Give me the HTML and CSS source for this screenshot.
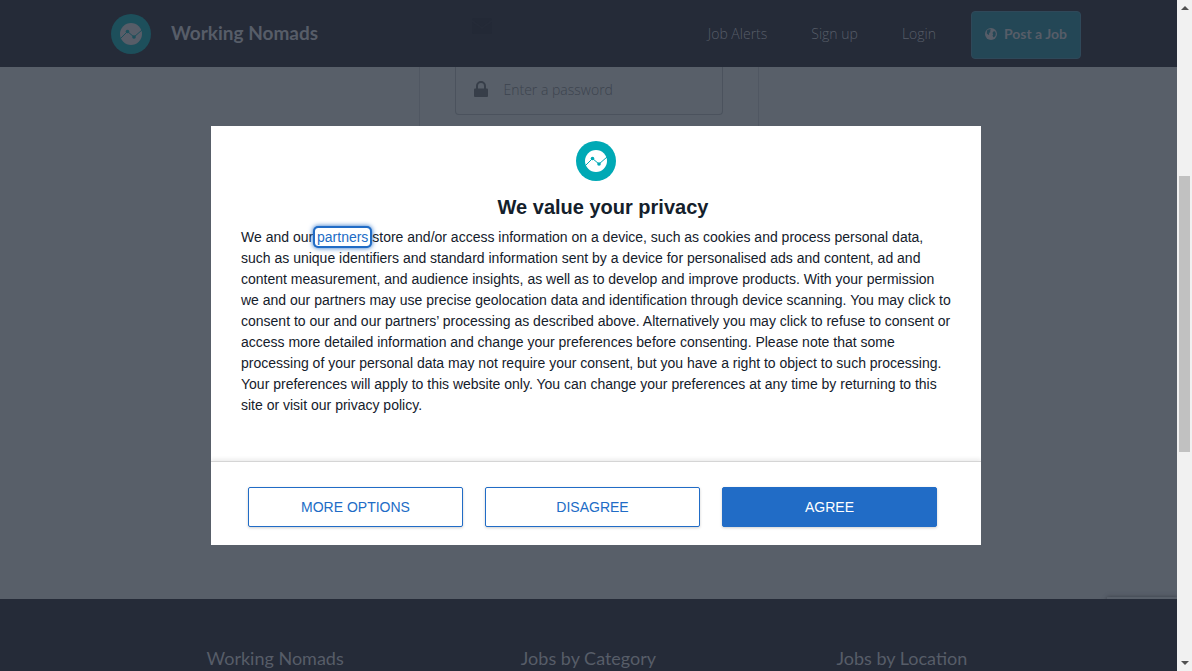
FILE: index.html
```html
<!DOCTYPE html>
<html lang="en">
<head>
<meta charset="utf-8">
<title>Working Nomads</title>
<link rel="stylesheet" href="styles.css">
</head>
<body>
<svg class="defs" aria-hidden="true">
  <symbol id="logo" viewBox="0 0 40 40">
    <circle cx="20" cy="20" r="20" class="logo-ring"/>
    <circle cx="20" cy="20" r="11" class="logo-disc"/>
    <path d="M9.500 24.500 16.500 17.500 23 23 31 16" class="logo-line"/>
    <circle cx="16.500" cy="17.500" r="1.800" class="logo-ring"/>
    <circle cx="23" cy="23" r="1.800" class="logo-ring"/>
  </symbol>
</svg>
<div class="page">
  <header class="topbar">
    <div class="topbar-inner">
      <a class="brand" href="#"><svg class="logo logo-dim" aria-hidden="true"><use href="#logo"/></svg><span>Working Nomads</span></a>
      <svg class="mail" viewBox="0 0 20 16" aria-hidden="true"><path d="M0 1.500Q0 0 1.500 0h17Q20 0 20 1.500L10 9 0 1.500zM0 4l10 7 10-7v10.500Q20 16 18.500 16h-17Q0 16 0 14.500z"/></svg>
      <nav class="nav">
        <a href="#">Job Alerts</a>
        <a href="#">Sign up</a>
        <a href="#">Login</a>
        <a class="post" href="#"><svg class="globe" viewBox="0 0 12 12" aria-hidden="true"><circle cx="6" cy="6" r="6" class="globe-sea"/><path d="M2 2.500 4 1.200 6 1.500 5 3 5.500 4 4 5 4.200 6.200 3.500 7 1.800 5.500zM8.300 3.500l1.700-.3.800 2.300-.4 2.500L8.500 9.500 7.500 7.500 8.200 6.500 7.500 5z" class="globe-land"/></svg>Post a Job</a>
      </nav>
    </div>
  </header>
  <main class="main">
    <form class="card">
      <label class="field">
        <svg class="lock" viewBox="0 0 14 16" aria-hidden="true"><path d="M3 8V5a4 4 0 0 1 8 0v3" class="lock-bow"/><rect y="7.500" width="14" height="8.500" rx="1"/></svg>
        <input type="password" placeholder="Enter a password" aria-label="Password">
      </label>
    </form>
    <div class="badge"></div>
  </main>
  <footer class="footer">
    <div class="footer-cols">
      <h3>Working Nomads</h3>
      <h3>Jobs by Category</h3>
      <h3>Jobs by Location</h3>
    </div>
  </footer>
</div>
<div class="scrollbar" aria-hidden="true">
  <span class="arrow arrow-up"></span>
  <div class="track"><span class="thumb"></span></div>
  <span class="arrow arrow-down"></span>
</div>
<div class="overlay">
  <section class="dialog" role="dialog" aria-labelledby="privacy-title">
    <div class="dialog-logo"><svg class="logo" aria-hidden="true"><use href="#logo"/></svg></div>
    <h2 id="privacy-title">We value your privacy</h2>
    <p class="copy">We and our <a class="partners" href="#">partners</a> store and/or access information on a device, such as cookies and process personal data, such as unique identifiers and standard information sent by a device for personalised ads and content, ad and content measurement, and audience insights, as well as to develop and improve products. With your permission we and our partners may use precise geolocation data and identification through device scanning. You may click to consent to our and our partners’ processing as described above. Alternatively you may click to refuse to consent or access more detailed information and change your preferences before consenting. Please note that some processing of your personal data may not require your consent, but you have a right to object to such processing. Your preferences will apply to this website only. You can change your preferences at any time by returning to this site or visit our privacy policy.</p>
    <div class="actions">
      <button type="button">MORE OPTIONS</button>
      <button type="button">DISAGREE</button>
      <button type="button" class="primary">AGREE</button>
    </div>
  </section>
</div>
</body>
</html>
```

FILE: styles.css
```css
* { box-sizing: border-box; }
body {
  margin: 0;
  display: flex;
  height: 100vh;
  overflow: hidden;
  font-family: "Liberation Sans", Arial, sans-serif;
}
a { color: inherit; text-decoration: none; }
.defs { position: absolute; width: 0; height: 0; }
.page {
  flex: 1;
  display: flex;
  flex-direction: column;
  background: #585f69;
  color: #575d68;
  font-family: Lato, sans-serif;
}

.topbar { background: #252b38; padding: 11px 0 8px 15px; }
.topbar-inner {
  position: relative;
  display: flex;
  align-items: center;
  justify-content: space-between;
  max-width: 970px;
  margin: 0 auto;
}
.brand { display: flex; align-items: center; gap: 20px; padding-bottom: 2px; font-size: 19px; font-weight: 700; line-height: 24px; }
.brand span { padding-bottom: 2px; }
.logo { display: block; width: 40px; height: 40px; }
.logo-ring { fill: var(--ring, #00a9b5); }
.logo-disc { fill: var(--disc, #fff); }
.logo-line { fill: none; stroke: var(--ring, #00a9b5); stroke-width: 1; }
.logo-dim { --ring: #1d4f5b; --disc: #575d68; }
.mail { position: absolute; left: 361px; top: 7px; width: 20px; height: 16px; fill: #232936; }
.nav { display: flex; align-items: center; gap: 44px; font-family: "Open Sans", sans-serif; font-size: 14px; font-weight: 300; line-height: 20px; }
.nav > a:not(.post) { padding-bottom: 2px; }
.post {
  display: flex;
  align-items: center;
  gap: 7px;
  height: 48px;
  margin-left: -9px;
  padding: 0 13px 2px;
  border: 1px solid #2f4859;
  border-radius: 4px;
  background: #244756;
  font-family: Lato, sans-serif;
  font-size: 14px;
  font-weight: 700;
}
.globe { width: 12px; height: 12px; }
.globe-sea { fill: #575d68; }
.globe-land { fill: #244756; }

.main { position: relative; flex: 1; overflow: hidden; }
.card {
  width: 340px;
  height: 360px;
  margin: 0 auto;
  padding: 0 35px;
  border: solid #505762;
  border-width: 0 1px;
}
.field {
  display: flex;
  align-items: center;
  gap: 16px;
  height: 48px;
  padding: 0 18px 3px;
  border: 1px solid #4b525d;
  border-top: 0;
  border-radius: 0 0 4px 4px;
}
.lock { width: 14px; height: 16px; fill: #373e49; }
.lock-bow { fill: none; stroke: #373e49; stroke-width: 2; }
.field input {
  width: 180px;
  padding: 0;
  border: 0;
  background: none;
  font-family: "Open Sans", sans-serif;
  font-size: 14px;
  font-weight: 300;
}
.field input::placeholder { color: #3c434e; opacity: 1; }
.badge {
  position: absolute;
  right: 0;
  bottom: -58px;
  width: 70px;
  height: 60px;
  background: #585f69;
  box-shadow: 0 0 4px #383d47;
}

.footer { height: 72px; padding-top: 48px; background: #252b38; }
.footer-cols { display: grid; grid-template-columns: repeat(3, 1fr); max-width: 940px; margin: 0 auto; text-align: center; }
.footer h3 { margin: 0; font-size: 18px; font-weight: 400; line-height: 22px; }

.scrollbar { display: flex; flex-direction: column; align-items: center; justify-content: space-between; width: 15px; padding: 6px 0; background: #f1f1f1; }
.arrow { border: solid transparent; border-width: 0 4px; }
.arrow-up { border-bottom: 4px solid #505050; }
.arrow-down { border-top: 4px solid #505050; }
.track { flex: 1; width: 11px; padding-top: 166px; }
.thumb { display: block; height: 276px; background: #c1c1c1; }

.overlay { position: fixed; inset: 0; display: flex; align-items: center; justify-content: center; }
.dialog { width: 770px; max-width: 100%; overflow: hidden; background: #fff; color: #14202b; }
.dialog-logo { display: flex; justify-content: center; padding-top: 15px; }
.dialog h2 { margin: 14px 0 8px; padding-left: 14px; font-size: 20px; line-height: 24px; text-align: center; }
.copy { margin: 0; padding: 0 28px 45px 30px; font-size: 14px; line-height: 21px; }
.partners {
  margin: 0 -2px;
  padding: 1px 2px;
  border-radius: 3px;
  color: #216cc6;
  box-shadow: 0 0 0 2px #216cc6, 0 0 5px 2px #216cc6;
}
.actions {
  display: flex;
  gap: 22px;
  padding: 25px 44px 18px 37px;
  border-top: 1px solid #d5d5d5;
  box-shadow: 0 -2px 4px #ececec;
}
.actions button {
  flex: 1;
  height: 40px;
  padding: 0;
  border: 1px solid #216cc6;
  border-radius: 2px;
  background: #fff;
  color: #216cc6;
  font: 14px "Liberation Sans", Arial, sans-serif;
  box-shadow: 0 1px 3px #d0d0d0;
}
.actions .primary { background: #216cc6; color: #fff; }
```
